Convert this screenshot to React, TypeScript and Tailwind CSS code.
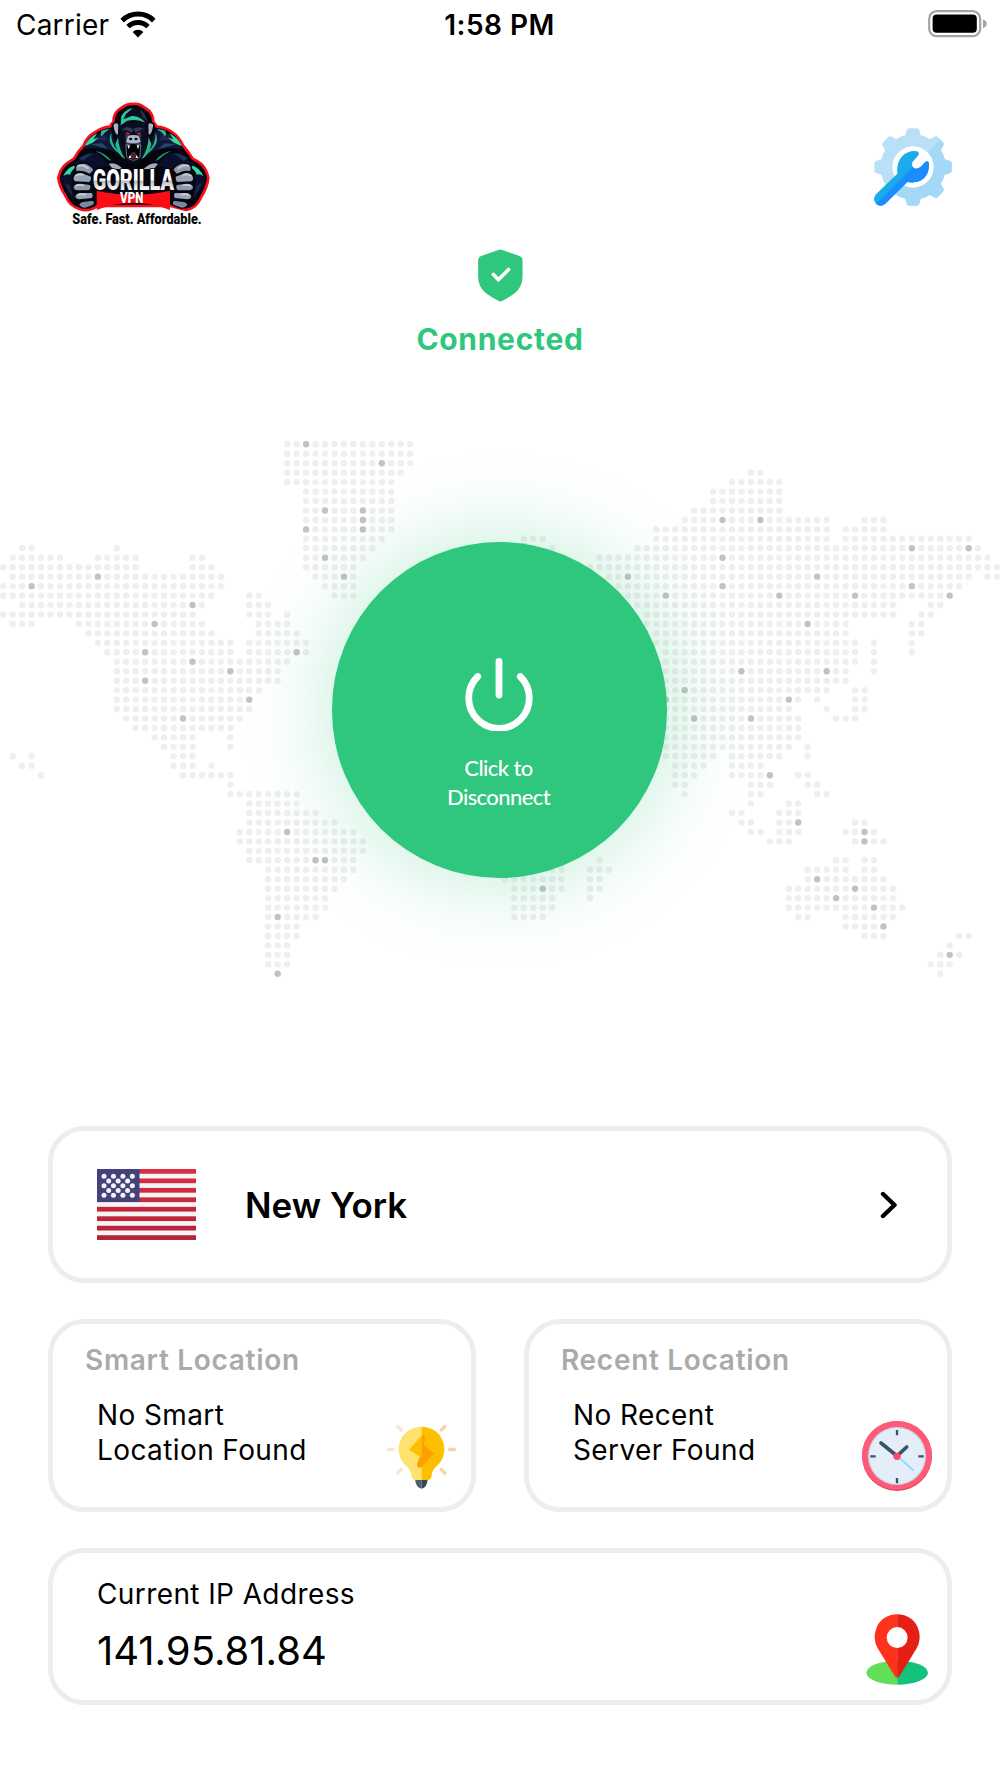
import React from 'react';

// column ranges per row of the dotted world map
const mapRows = [
    '30-43',
    '30-43',
    '30-43',
    '30-42 79-80',
    '30-41 77-82',
    '32-41 75-82',
    '32-41 75-82',
    '32-41 73-82',
    '32-41 72-87 91-93',
    '32-41 69-87 89-93',
    '32-40 55-57 69-87 89-102',
    '2-3 12 32-39 58 67-103',
    '1-6 10-14 20-21 32-38 63-104',
    '0-14 20-22 32-37 62-105',
    '1-23 33-37 64-102 104-105',
    '0-23 34-37 65-101',
    '0-22 26-27 35-37 66-100',
    '2-21 26-28 67-94 98-99',
    '0-20 26-28 30 68-94 97-98',
    '1-3 8-21 27-30 68-89 96-97',
    '9-22 27-31 69-89 96-97',
    '10-24 26-32 69-90 92 96',
    '11-24 26-32 70-90 92 96',
    '12-30 70-90 92',
    '12-29 70-89 92',
    '12-29 70-89',
    '12-27 70-87 90-91',
    '12-26 70-84 86 90-91',
    '12-26 70-83 87 90-91',
    '13-25 70-84 88-90',
    '14-24 70-84',
    '16-20 24 70-84',
    '17-20 24 70-83 85',
    '1 3 18-20 70-75 77-82 85',
    '2-3 18-20 22 71-74 77-80',
    '4 19-24 71-73 77-81 84-85',
    '24 71-72 79-81 85-86',
    '24-31 72 79-80 86-87',
    '26-31 79 83-84',
    '26-33 77-78 82-84',
    '26-35 78-79 82-84 90-91',
    '25-37 79-80 82-84 89-92',
    '25-38 81-83 90-93',
    '26-38',
    '26-37 63 88-89 91-92',
    '28-37 58-59 62-64 85-89 91-92',
    '28-36 53-59 62-63 85-93',
    '28-35 54-59 62-63 83-94',
    '28-34 54-58 62 83-94',
    '28-34 54-58 83-95',
    '28-33 54-57 84-85 89-94',
    '28-31 89-93',
    '28-31 91-93 101-102',
    '28-30 100',
    '28-30 99-101',
    '28-30 98-100',
    '29 99',
];

const activeDots: Record<number, number[]> = {
    0: [32],
    2: [40],
    7: [34, 38],
    8: [38, 76, 80],
    9: [32, 38],
    11: [96, 102],
    12: [34, 76],
    14: [10, 36, 66, 86],
    15: [3, 76, 96],
    16: [70, 82, 90, 100],
    17: [20],
    19: [16, 85],
    22: [15, 31],
    23: [20],
    24: [24, 78, 87],
    25: [15],
    26: [72],
    27: [26, 70, 83],
    29: [19, 73, 79],
    35: [81],
    40: [84],
    41: [30, 91],
    42: [91],
    44: [33, 34],
    46: [86],
    47: [57, 90],
    48: [88],
    49: [92],
    50: [29],
    51: [93],
    54: [100],
    56: [29],
};

const expandRow = (row: string) =>
    row.split(' ').flatMap((part) => {
        const [from, to = from] = part.split('-').map(Number);
        return Array.from({ length: to - from + 1 }, (_, i) => from + i);
    });

const WorldMap: React.FC = () => (
    <svg viewBox="0 430 1000 560" className="block w-[1000px] h-[560px]">
        {mapRows.map((row, r) =>
            expandRow(row).map((c) => (
                <circle
                    key={`${r}-${c}`}
                    cx={3.2 + c * 9.465}
                    cy={444.3 + r * 9.455}
                    r={3.2}
                    fill={activeDots[r]?.includes(c) ? '#c2c2c2' : '#efefef'}
                />
            ))
        )}
    </svg>
);

const WifiIcon: React.FC = () => (
    <svg viewBox="0 0 36 27" className="w-[36px] h-[27px] -mt-[2px]">
        <path d="M2.2 9.6A22.5 22.5 0 0 1 33.8 9.6" fill="none" stroke="#000" strokeWidth="5" />
        <path d="M8 15.6A14.2 14.2 0 0 1 28 15.6" fill="none" stroke="#000" strokeWidth="4.8" />
        <path d="M18 26.4L12.6 21A7.8 7.8 0 0 1 23.4 21Z" fill="#000" />
    </svg>
);

const BatteryIcon: React.FC = () => (
    <svg viewBox="0 0 60 28" className="w-[60px] h-[28px] -mt-[3px]">
        <rect x="1.2" y="1.2" width="51" height="25" rx="7.5" fill="none" stroke="#a3a3a3" strokeWidth="2.2" />
        <rect x="4.6" y="4.6" width="44.2" height="18.2" rx="4" fill="#000" />
        <path d="M55 9.4Q58.8 10.8 58.8 13.8T55 18.2Z" fill="#a3a3a3" />
    </svg>
);

const Fist: React.FC = () => (
    <g stroke="#05060f" strokeWidth="4" strokeLinejoin="round">
        <path d="M106 232Q112 218 134 219Q154 224 162 240L150 254Q126 240 108 246Z" fill="#8e99ac" />
        <path d="M99 262Q104 246 124 247L154 258Q158 270 148 278L106 276Q97 272 99 262Z" fill="#98a4b6" />
        <path d="M99 290Q104 278 122 279L150 283Q158 292 148 302L110 303Q98 300 99 290Z" fill="#8e99ac" />
        <path d="M104 318Q110 306 126 307L156 307Q164 316 156 326L118 330Q104 328 104 318Z" fill="#98a4b6" />
        <path d="M116 342Q122 332 136 333L158 330Q168 336 160 346L136 355Q118 354 116 342Z" fill="#7c889e" />
        <path d="M112 228Q128 222 146 236M106 258Q116 250 132 255M107 288Q118 282 132 287M113 315Q122 310 138 314" stroke="#c6cfdb" strokeWidth="5" fill="none" />
    </g>
);

const ArmShading: React.FC = () => (
    <g>
        <path d="M62 264Q82 228 122 206Q154 190 170 188Q192 204 208 228L160 236Q130 208 106 226Q92 240 96 270Q92 300 106 330Q76 306 62 264Z" fill="#0c0f2b" />
        <path d="M132 176Q166 126 214 120Q222 150 236 190Q188 168 132 176Z" fill="#11163a" />
        <path d="M136 164Q150 140 172 130L160 148L178 142L158 158L136 168Z" fill="#37d9a2" />
        <path d="M184 122Q198 116 210 118L196 126L184 140Q180 132 184 122Z" fill="#2bb892" />
        <path d="M214 128Q212 150 224 170L240 192Q222 182 211 160Q206 142 214 128Z" fill="#27b58c" />
        <path d="M70 258Q80 236 100 228L110 230Q94 240 90 254Q80 250 70 258Z" fill="#37d9a2" />
        <path d="M116 206Q134 190 162 190Q144 198 130 212Z" fill="#1a3358" />
        <path d="M166 182Q196 188 214 212L206 210Q190 194 166 182Z" fill="#1f9c80" />
        <path d="M150 162L186 160L206 178L178 170Z" fill="#274769" />
        <path d="M168 150L192 134L204 152L190 150Z" fill="#1c2a52" />
        <path d="M74 278Q82 302 98 318L90 286Z" fill="#182548" />
    </g>
);

const GorillaLogo: React.FC = () => (
    <svg viewBox="0 0 570 450" className="w-[190px] h-[150px]">
        <defs>
            <linearGradient id="metal" x1="0" y1="0" x2="0" y2="1">
                <stop offset="0.5" stopColor="#ffffff" />
                <stop offset="0.55" stopColor="#b9bcc2" />
                <stop offset="0.75" stopColor="#f4f4f4" />
            </linearGradient>
        </defs>
        <path
            d="M55 264Q60 238 78 222Q92 212 102 206Q112 186 130 168Q140 140 166 126Q186 112 210 110Q214 100 220 96Q220 66 246 52Q264 40 280 42Q298 40 316 54Q340 68 340 96Q346 102 350 110Q376 112 396 126Q418 140 430 168Q446 186 458 206Q472 212 484 222Q500 238 505 264Q502 292 484 320Q472 354 438 360L392 348L172 348Q148 366 120 358Q88 348 78 320Q58 290 55 264Z"
            fill="#04050d"
            stroke="#f90f1c"
            strokeWidth="8"
            strokeLinejoin="round"
        />
        <ArmShading />
        <g transform="translate(560 0) scale(-1 1)">
            <ArmShading />
        </g>
        {/* head */}
        <path d="M236 108Q238 60 278 52Q320 58 324 110L330 170Q310 214 280 220Q250 214 230 170Z" fill="#0a0c20" />
        <path d="M244 78Q256 58 278 54L258 72L250 88L276 78Q298 76 316 98Q298 88 278 90L262 92L242 106Z" fill="#2cc79a" />
        <path d="M300 58Q316 70 322 94L306 78Z" fill="#27315a" />
        <path d="M218 104Q228 92 237 102L236 136Q222 138 218 104ZM342 104Q332 92 323 102L324 136Q338 138 342 104Z" fill="#a9b3c4" stroke="#04050d" strokeWidth="4" />
        <path d="M246 118Q262 106 279 118Q296 106 314 118L304 134Q300 152 304 172L256 172Q260 150 254 132Z" fill="#303a59" />
        <path d="M250 118L276 128L280 116L286 128L312 116L306 132L284 136L274 136L254 132Z" fill="#080a18" />
        <path d="M256 125L272 131L262 134ZM304 125L288 131L298 134Z" fill="#ff1f2b" />
        <path d="M264 138Q280 132 296 138L302 156Q280 164 258 156Z" fill="#aeb7c5" />
        <ellipse cx="272" cy="147" rx="5" ry="4" fill="#0b0d1c" />
        <ellipse cx="288" cy="147" rx="5" ry="4" fill="#0b0d1c" />
        <path d="M258 164Q280 156 302 164L300 200Q280 222 260 200Z" fill="#020308" stroke="#5f6b82" strokeWidth="3" />
        <path d="M262 166L266 178L270 166ZM290 166L294 178L298 166ZM266 204L270 194L275 204ZM286 204L290 194L294 204Z" fill="#ffffff" />
        <path d="M272 190Q280 182 288 190L286 208L274 208Z" fill="#57202e" />
        <path d="M234 142Q236 178 256 208Q232 196 226 162ZM326 142Q324 178 304 208Q328 196 334 162Z" fill="#27b58c" />
        <path d="M206 222Q226 214 250 238L218 236ZM354 222Q334 214 310 238L342 236Z" fill="#9fabbe" />
        <path d="M170 302Q280 326 390 302V360Q280 316 170 360Z" fill="#fb0d16" />
        <Fist />
        <g transform="translate(560 0) scale(-1 1)">
            <Fist />
        </g>
        <text
            x="158"
            y="299"
            textLength="244"
            lengthAdjust="spacingAndGlyphs"
            fontFamily="Roboto, sans-serif"
            fontWeight="900"
            fontSize="88"
            fill="url(#metal)"
            stroke="#05060d"
            strokeWidth="5"
            paintOrder="stroke"
        >
            GORILLA
        </text>
        <text x="240" y="340" textLength="70" lengthAdjust="spacingAndGlyphs" fontFamily="Roboto, sans-serif" fontWeight="900" fontSize="43" fill="#fff">
            VPN
        </text>
        <text x="97" y="403" textLength="388" lengthAdjust="spacingAndGlyphs" fontFamily="Roboto, sans-serif" fontWeight="900" fontSize="43" fill="#080808">
            Safe. Fast. Affordable.
        </text>
    </svg>
);

const toothAngles = [0, 45, 90, 135, 180, 270, 315];

const SettingsIcon: React.FC = () => (
    <svg viewBox="72 53 234 234" className="w-[78px] h-[78px]">
        <defs>
            <clipPath id="lower">
                <path d="M60 300L310 48V300Z" />
            </clipPath>
            <g id="gear">
                <circle cx="189" cy="170" r="98" />
                {toothAngles.map((a) => (
                    <path key={a} d="M164 82L170 60Q172 54 178 54H200Q206 54 208 60L214 82Z" transform={`rotate(${a} 189 170)`} />
                ))}
            </g>
            <path
                id="wrench"
                d="M78 252L142 190C138 150 160 122 195 122Q212 124 204 136L188 154Q182 170 196 175Q206 176 214 168L226 155Q236 148 237 162C238 200 212 222 172 215L106 280Q92 292 78 280Q66 268 78 252Z"
            />
        </defs>
        <use href="#gear" fill="#b9e0f7" />
        <use href="#gear" fill="#a3d9f6" clipPath="url(#lower)" />
        <circle cx="189" cy="170" r="62" fill="#fff" />
        <use href="#wrench" fill="#1aabe8" />
        <use href="#wrench" fill="#1a8cff" clipPath="url(#lower)" />
    </svg>
);

const ShieldIcon: React.FC = () => (
    <svg viewBox="233 56 135 160" className="w-[45px] h-[53px]">
        <path d="M294 59Q300 56 306 59L358 77Q367 81 367 90V142Q366 170 345 188Q330 200 305 213Q300 216 295 213Q270 200 255 188Q234 170 233 142V90Q233 81 242 77Z" fill="#2fc67d" />
        <path d="M279 133L294 149L325 118" fill="none" stroke="#fff" strokeWidth="11" strokeLinecap="round" strokeLinejoin="round" />
    </svg>
);

const PowerIcon: React.FC = () => (
    <svg viewBox="0 0 68 74" className="w-[68px] h-[74px]" fill="none" stroke="#fff" strokeWidth="6.8" strokeLinecap="round">
        <path d="M34 4.5V38" />
        <path d="M12.7 19.5A30.3 30.3 0 1 0 55.3 19.5" />
    </svg>
);

const UsFlag: React.FC = () => (
    <svg viewBox="0 0 99 71" className="w-[99px] h-[71px]">
        <defs>
            <linearGradient id="red" x1="0" y1="0" x2="0" y2="71" gradientUnits="userSpaceOnUse">
                <stop offset="0" stopColor="#d93044" />
                <stop offset="1" stopColor="#b22238" />
            </linearGradient>
        </defs>
        <rect width="99" height="71" fill="#f6f5f6" />
        {[0, 1, 2, 3, 4, 5, 6, 7].map((i) => (
            <rect key={i} y={i * 9.46} width="99" height="4.75" fill="url(#red)" />
        ))}
        <rect width="42.5" height="33" fill="#43427a" />
        {[0, 1, 2, 3, 4].map((r) =>
            (r % 2 ? [0, 1, 2] : [0, 1, 2, 3]).map((c) => (
                <circle key={`${r}${c}`} cx={(r % 2 ? 11.7 : 7) + c * 9.45} cy={7.2 + r * 4.75} r="2.5" fill="#f2f2f8" />
            ))
        )}
    </svg>
);

const BulbIcon: React.FC = () => (
    <svg viewBox="1038 372 214 196" className="w-[71px] h-[65px]">
        <g strokeWidth="11" strokeLinecap="round">
            <path d="M1074 380L1084 390M1046 449H1060M1074 520L1084 510" stroke="#fbe6d2" />
            <path d="M1215 380L1205 390M1230 449H1244M1215 520L1205 510" stroke="#f7d4a8" />
        </g>
        <path d="M1145 380A68 68 0 0 0 1096 496Q1114 512 1114 526Q1116 540 1128 542H1145Z" fill="#ffe26e" />
        <path d="M1145 380A68 68 0 0 1 1194 496Q1176 512 1176 526Q1174 540 1162 542H1145Z" fill="#fdbf00" />
        <path d="M1145 408L1107 450L1145 474Z" fill="#fdbf00" />
        <path d="M1145 408Q1152 402 1157 410L1152 436L1183 461L1144 503Q1134 508 1131 496L1138 474L1145 470Z" fill="#ff9f00" />
        <path d="M1126 541H1145V567Q1128 564 1126 541Z" fill="#47626c" />
        <path d="M1145 541H1163Q1162 564 1145 567Z" fill="#354a54" />
    </svg>
);

const ClockIcon: React.FC = () => (
    <svg viewBox="0 0 210 210" className="w-[70px] h-[70px]">
        <circle cx="105" cy="105" r="105" fill="#e54560" />
        <ellipse cx="105" cy="103" rx="105" ry="103" fill="#ff5a78" />
        <circle cx="105" cy="105" r="87" fill="#cedbeb" />
        <circle cx="105" cy="105" r="83" fill="#e4eef8" />
        <path d="M105 27V43M105 171V187M25 106H41M169 106H185" stroke="#3a5365" strokeWidth="7" />
        <path d="M105 105L153 147" stroke="#8fdcff" strokeWidth="6" strokeLinecap="round" />
        <path d="M57 66L105 105L134 78" fill="none" stroke="#3a5365" strokeWidth="11" strokeLinecap="round" />
        <circle cx="105" cy="106" r="11" fill="#ff4766" />
    </svg>
);

const PinIcon: React.FC = () => (
    <svg viewBox="138 251 187 214" className="w-[62px] h-[71px]">
        <path d="M232 392A93 36 0 0 0 232 464Z" fill="#62de59" />
        <path d="M232 392A93 36 0 0 1 232 464Z" fill="#15c27c" />
        <path d="M232 252Q186 254 170 292Q156 326 174 356L225 439Q228 443 232 443Z" fill="#ff331c" />
        <path d="M232 252Q278 254 294 292Q308 326 290 356L239 439Q236 443 232 443Z" fill="#e61f14" />
        <circle cx="232" cy="322" r="31.5" fill="#fff" />
    </svg>
);

const cardClass = 'rounded-[36px] border-[5px] border-[#ededed] bg-white';

interface LocationCardProps {
    title: string;
    lines: string[];
    icon: React.ReactNode;
    iconClass: string;
}

const LocationCard: React.FC<LocationCardProps> = ({ title, lines, icon, iconClass }) => (
    <div className={`${cardClass} relative w-[428px] h-[193px] pt-[19px]`}>
        <h2 className="pl-[32px] text-[28px] leading-[34px] font-semibold tracking-[0.7px] text-[#aaaaaa]">{title}</h2>
        <p className="mt-[21px] pl-[44px] text-[28px] leading-[34.5px] tracking-[0.4px]">
            {lines.map((line) => (
                <span key={line} className="block">{line}</span>
            ))}
        </p>
        <div className={`absolute ${iconClass}`}>{icon}</div>
    </div>
);

export default function App() {
    return (
        <div className="w-[1000px] h-[1778px] flex flex-col overflow-hidden bg-white text-black font-[Inter,sans-serif]">
            <div className="h-[51px] shrink-0 grid grid-cols-3 items-center pl-[16px] pr-[12px] text-[28px] leading-[51px]">
                <div className="flex items-center gap-[11px]">
                    <span className="tracking-[0.2px]">Carrier</span>
                    <WifiIcon />
                </div>
                <div className="-ml-[5px] text-center font-semibold tracking-[0.5px]">1:58 PM</div>
                <div className="flex justify-end">
                    <BatteryIcon />
                </div>
            </div>

            <header className="h-[189px] shrink-0 flex items-start justify-between pt-[39px] pl-[40px] pr-[48px]">
                <GorillaLogo />
                <button className="mt-[38px]">
                    <SettingsIcon />
                </button>
            </header>

            <div className="flex shrink-0 flex-col items-center pt-[9px]">
                <ShieldIcon />
                <div className="mt-[17px] text-[30px] leading-[40px] font-bold tracking-[0.7px] text-[#2fc67d]">Connected</div>
            </div>

            <div className="relative mt-[71px] h-[560px] shrink-0">
                <WorldMap />
                <button className="absolute left-[332px] top-[112px] flex h-[336px] w-[335px] flex-col items-center rounded-full bg-[#2fc67d] pt-[115px] pr-[2px] text-white shadow-[0_0_80px_8px_rgba(47,198,125,0.27)]">
                    <PowerIcon />
                    <span className="mt-[22px] w-[120px] font-[Lato,sans-serif] text-[22px] leading-[29px] font-medium tracking-[-0.6px]">
                        Click to Disconnect
                    </span>
                </button>
            </div>

            <main className="mx-[48px] mt-[136px] flex flex-col gap-[36px]">
                <div className={`${cardClass} flex h-[157px] items-center pl-[44px] pr-[49px]`}>
                    <UsFlag />
                    <span className="ml-[49px] flex-1 text-[35px] leading-[42px] font-semibold">New York</span>
                    <svg viewBox="0 0 18 28" className="w-[18px] h-[28px]" fill="none" stroke="#000" strokeWidth="4.4" strokeLinecap="round" strokeLinejoin="round">
                        <path d="M3 3L14.5 14L3 25" />
                    </svg>
                </div>

                <div className="flex justify-between">
                    <LocationCard
                        title="Smart Location"
                        lines={['No Smart', 'Location Found']}
                        icon={<BulbIcon />}
                        iconClass="left-[333px] top-[100px]"
                    />
                    <LocationCard
                        title="Recent Location"
                        lines={['No Recent', 'Server Found']}
                        icon={<ClockIcon />}
                        iconClass="left-[333px] top-[97px]"
                    />
                </div>

                <div className={`${cardClass} relative h-[157px] pt-[24px] pl-[44px]`}>
                    <div className="text-[28px] leading-[34px] tracking-[0.4px]">Current IP Address</div>
                    <div className="mt-[16px] text-[40px] leading-[48px]">141.95.81.84</div>
                    <div className="absolute left-[813px] top-[61px]">
                        <PinIcon />
                    </div>
                </div>
            </main>
        </div>
    );
}
